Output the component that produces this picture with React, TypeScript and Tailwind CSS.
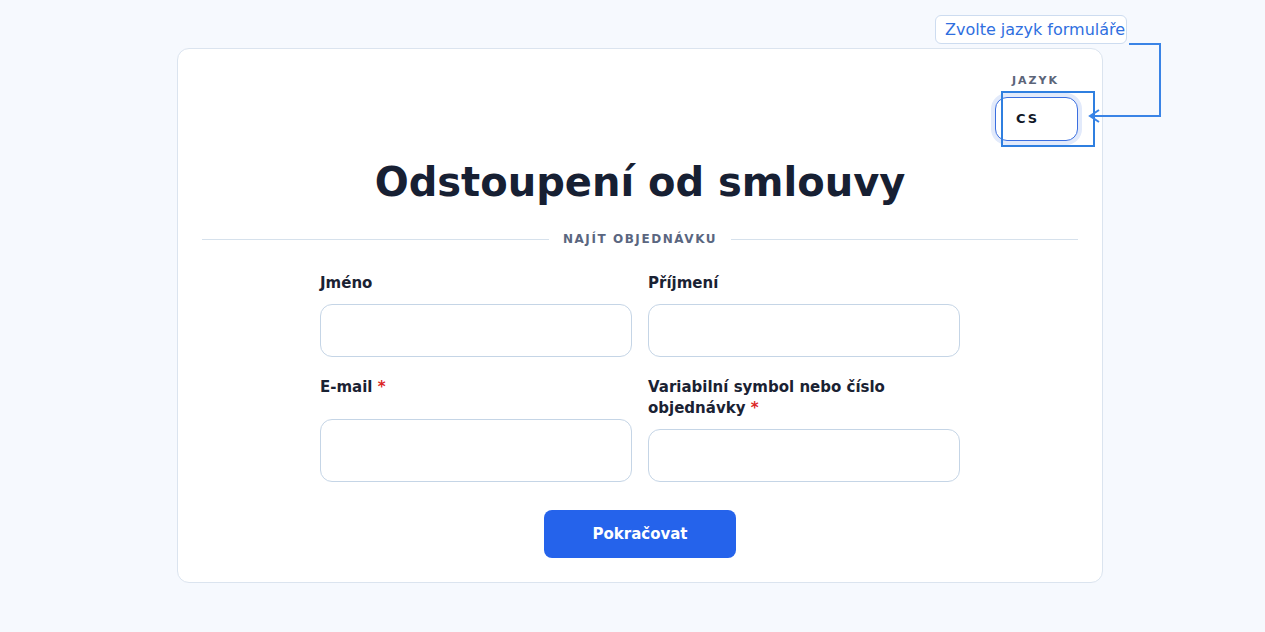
import { useState } from 'react';

const font = { fontFamily: '"DejaVu Sans", "Noto Sans", sans-serif' };

const Field = ({ label, required, grow }: { label: string; required?: boolean; grow?: boolean }) => (
    <div className="flex flex-col">
        <label className={`text-[15px] leading-[21px] font-bold text-[#1a2233] ${grow ? 'mb-[21px]' : 'mb-[10px]'}`}>
            {label}
            {required && <span className="text-[#dc2626]">&nbsp;*</span>}
        </label>
        <input
            className={`${grow ? 'flex-1 min-h-[53px]' : 'h-[53px]'} w-full rounded-xl border border-[#c5d5e6] bg-white px-4 outline-none`}
        />
    </div>
);

const App = () => {
    const [lang] = useState('cs');

    return (
        <div className="min-h-[632px] bg-[#f6f9fe] pt-12 pl-[15px] relative flex justify-center items-start" style={font}>
            <div className="w-[926px] h-[535px] rounded-xl border border-[#dbe4ef] bg-white p-6">
                {/* Language picker */}
                <div className="flex justify-end">
                    <div className="flex flex-col items-start w-[83px]">
                        <span className="ml-[17px] text-[11px] leading-4 font-bold tracking-[0.18em] text-[#5b6478]">JAZYK</span>
                        <div className="mt-2 h-[44px] w-[83px] rounded-xl border border-[#3b6fe0] bg-white ring-4 ring-[#e2eafb] flex items-center pl-5">
                            <span className="text-[13px] font-bold tracking-[0.15em] text-[#111827] uppercase">{lang}</span>
                        </div>
                    </div>
                </div>

                <h1 className="mt-[17px] text-center text-[40px] leading-[48px] font-bold text-[#172033]">Odstoupení od smlouvy</h1>

                {/* Divider */}
                <div className="mt-[25px] flex items-center gap-[14px]">
                    <div className="flex-1 h-px bg-[#d6e1ec]" />
                    <span className="text-[12px] leading-4 font-bold tracking-[0.13em] text-[#5a6680]">NAJÍT OBJEDNÁVKU</span>
                    <div className="flex-1 h-px bg-[#d6e1ec]" />
                </div>

                <form className="mx-auto mt-[26px] w-[640px] grid grid-cols-2 gap-x-4 gap-y-5">
                    <Field label="Jméno" />
                    <Field label="Příjmení" />
                    <Field label="E-mail" required grow />
                    <Field label="Variabilní symbol nebo číslo objednávky" required />
                </form>

                <div className="mt-[28px] flex justify-center">
                    <button className="h-12 w-48 rounded-lg bg-[#2563eb] text-white text-[15px] font-bold">Pokračovat</button>
                </div>
            </div>

            {/* Annotation overlay */}
            <div className="absolute left-[935px] top-[15px] w-[192px] h-[29px] rounded-md border border-[#cddcf0] bg-white pl-[9px] whitespace-nowrap text-[16px] leading-[27px] text-[#2f6fdf]">
                Zvolte jazyk formuláře
            </div>
            <div className="absolute left-[1001px] top-[91px] w-[94px] h-[56px] border-2 border-[#2f7fe0]" />
            <svg className="absolute left-[1085px] top-[42px]" width="80" height="82" viewBox="0 0 80 82" fill="none">
                <path d="M44 2 H75 V74 H6" stroke="#3a84e6" strokeWidth="2" />
                <path d="M14 68 L5 74 L14 80" stroke="#3a84e6" strokeWidth="2" />
            </svg>
        </div>
    );
};

export default App;
